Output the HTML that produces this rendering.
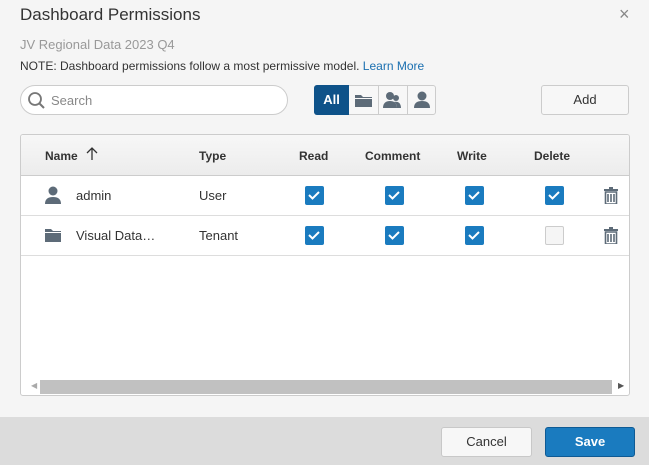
<!DOCTYPE html>
<html><head><style>
*{box-sizing:border-box;margin:0;padding:0}
body{width:649px;height:465px;background:#f5f5f5;font-family:"Liberation Sans",sans-serif;position:relative;overflow:hidden;color:#333}
.a{position:absolute}
.cb{position:absolute;width:19px;height:19px;background:#1a7bbf;border-radius:2px}
.cb svg{position:absolute;left:3px;top:4px}
.cb.off{background:#f5f5f5;border:1px solid #ccc}
.hd{position:absolute;top:149px;font-size:12px;font-weight:bold;color:#333}
.tr{position:absolute;left:604px}
</style></head><body>
<div class="a" style="left:20px;top:5px;font-size:17px;color:#333">Dashboard Permissions</div>
<div class="a" style="left:619px;top:4px;font-size:18px;color:#888">×</div>
<div class="a" style="left:20px;top:37px;font-size:13px;color:#999">JV Regional Data 2023 Q4</div>
<div class="a" style="left:20px;top:59px;font-size:12px;color:#333">NOTE: Dashboard permissions follow a most permissive model. <span style="color:#1a6fb0">Learn More</span></div>
<div class="a" style="left:20px;top:85px;width:268px;height:30px;border:1px solid #ccc;border-radius:15px;background:#fff">
<svg class="a" style="left:6px;top:5px" width="20" height="20"><circle cx="8" cy="8" r="6" fill="none" stroke="#777" stroke-width="1.8"/><line x1="12.5" y1="12.5" x2="17" y2="17" stroke="#777" stroke-width="2"/></svg>
<span class="a" style="left:30px;top:7px;font-size:13px;color:#888">Search</span></div>
<div class="a" style="left:314px;top:85px;width:122px;height:30px;border:1px solid #ccc;border-radius:3px;background:#f7f7f7"></div>
<div class="a" style="left:314px;top:85px;width:35px;height:30px;background:#0e5289;border-radius:3px 0 0 3px;color:#fff;font-weight:bold;font-size:13px;text-align:center;line-height:30px">All</div>
<div class="a" style="left:378px;top:86px;width:1px;height:28px;background:#ccc"></div>
<div class="a" style="left:407px;top:86px;width:1px;height:28px;background:#ccc"></div>
<svg class="a" style="left:354px;top:93px" width="20" height="15"><path d="M1 2h6l2 2h9v10H1z" fill="#5d6b78"/><rect x="1" y="5" width="17" height="1" fill="#f7f7f7"/></svg>
<svg class="a" style="left:382px;top:91px" width="22" height="18"><circle cx="8" cy="5" r="4" fill="#5d6b78"/><path d="M1 17c0-5 3-7 7-7s7 2 7 7z" fill="#5d6b78"/><circle cx="14" cy="7" r="3" fill="#5d6b78"/><path d="M15 17c0-3-1-5-3-6 4-1 7 1 7 6z" fill="#5d6b78"/></svg>
<svg class="a" style="left:413px;top:90px" width="18" height="19"><circle cx="9" cy="6" r="4.5" fill="#5d6b78"/><path d="M1 18c0-5 3-7 8-7s8 2 8 7z" fill="#5d6b78"/></svg>
<div class="a" style="left:541px;top:85px;width:88px;height:30px;border:1px solid #ccc;border-radius:3px;background:#f7f7f7;font-size:13px;text-align:center;line-height:28px">Add</div>
<div class="a" style="left:20px;top:134px;width:610px;height:262px;border:1px solid #ccc;border-radius:3px;background:#fff;overflow:hidden">
<div class="a" style="left:0;top:0;width:610px;height:41px;background:linear-gradient(#f7f7f7,#ececec);border-bottom:1px solid #ccc"></div>
<div class="a" style="left:0;top:80px;width:610px;height:1px;background:#ddd"></div>
<div class="a" style="left:0;top:120px;width:610px;height:1px;background:#ddd"></div>
<div class="a" style="left:10px;top:246px;width:7px;height:12px;color:#aaa;font-size:8px">◀</div>
<div class="a" style="left:19px;top:245px;width:572px;height:14px;background:#c1c1c1"></div>
<div class="a" style="left:597px;top:246px;font-size:8px;color:#555">▶</div>
</div>
<div class="hd" style="left:45px">Name</div>
<svg class="a" style="left:86px;top:147px" width="12" height="13"><path d="M6 1v12M1 6l5-5 5 5" fill="none" stroke="#333" stroke-width="1.3"/></svg>
<div class="hd" style="left:199px">Type</div>
<div class="hd" style="left:299px">Read</div>
<div class="hd" style="left:365px">Comment</div>
<div class="hd" style="left:457px">Write</div>
<div class="hd" style="left:534px">Delete</div>
<svg class="a" style="left:45px;top:186px" width="16" height="18"><circle cx="8" cy="5" r="4.5" fill="#5d6b78"/><path d="M0 18c0-5 3-7 8-7s8 2 8 7z" fill="#5d6b78"/></svg>
<div class="a" style="left:76px;top:188px;font-size:13px">admin</div>
<div class="a" style="left:199px;top:188px;font-size:13px">User</div>
<svg class="a" style="left:45px;top:229px" width="17" height="13"><path d="M0 0h6l2 2h8v11H0z" fill="#5d6b78"/><rect x="0" y="3" width="16" height="1" fill="#fff"/></svg>
<div class="a" style="left:76px;top:228px;font-size:13px">Visual Data…</div>
<div class="a" style="left:199px;top:228px;font-size:13px">Tenant</div>
<div class="cb" style="left:305px;top:186px"><svg width="12" height="10"><path d="M1 5l3.5 3.5L11 2" fill="none" stroke="#fff" stroke-width="2"/></svg></div>
<div class="cb" style="left:385px;top:186px"><svg width="12" height="10"><path d="M1 5l3.5 3.5L11 2" fill="none" stroke="#fff" stroke-width="2"/></svg></div>
<div class="cb" style="left:465px;top:186px"><svg width="12" height="10"><path d="M1 5l3.5 3.5L11 2" fill="none" stroke="#fff" stroke-width="2"/></svg></div>
<div class="cb" style="left:545px;top:186px"><svg width="12" height="10"><path d="M1 5l3.5 3.5L11 2" fill="none" stroke="#fff" stroke-width="2"/></svg></div>
<div class="cb" style="left:305px;top:226px"><svg width="12" height="10"><path d="M1 5l3.5 3.5L11 2" fill="none" stroke="#fff" stroke-width="2"/></svg></div>
<div class="cb" style="left:385px;top:226px"><svg width="12" height="10"><path d="M1 5l3.5 3.5L11 2" fill="none" stroke="#fff" stroke-width="2"/></svg></div>
<div class="cb" style="left:465px;top:226px"><svg width="12" height="10"><path d="M1 5l3.5 3.5L11 2" fill="none" stroke="#fff" stroke-width="2"/></svg></div>
<div class="cb off" style="left:545px;top:226px"></div>
<svg class="tr" style="top:187px" width="14" height="17"><rect x="0" y="2" width="14" height="2" fill="#5d6b78"/><rect x="5" y="0" width="4" height="2" fill="#5d6b78"/><path d="M1.5 5h11v12h-11z M4 7v8M7 7v8M10 7v8" fill="none" stroke="#5d6b78" stroke-width="1.6"/></svg>
<svg class="tr" style="top:227px" width="14" height="17"><rect x="0" y="2" width="14" height="2" fill="#5d6b78"/><rect x="5" y="0" width="4" height="2" fill="#5d6b78"/><path d="M1.5 5h11v12h-11z M4 7v8M7 7v8M10 7v8" fill="none" stroke="#5d6b78" stroke-width="1.6"/></svg>
<div class="a" style="left:0;top:417px;width:649px;height:48px;background:#dcdcdc"></div>
<div class="a" style="left:441px;top:427px;width:91px;height:30px;border:1px solid #c8c8c8;border-radius:3px;background:#f7f7f7;font-size:13px;text-align:center;line-height:28px">Cancel</div>
<div class="a" style="left:545px;top:427px;width:90px;height:30px;border:1px solid #0e5a94;border-radius:3px;background:#1a7bbf;color:#fff;font-weight:bold;font-size:13px;text-align:center;line-height:28px">Save</div>
</body></html>
